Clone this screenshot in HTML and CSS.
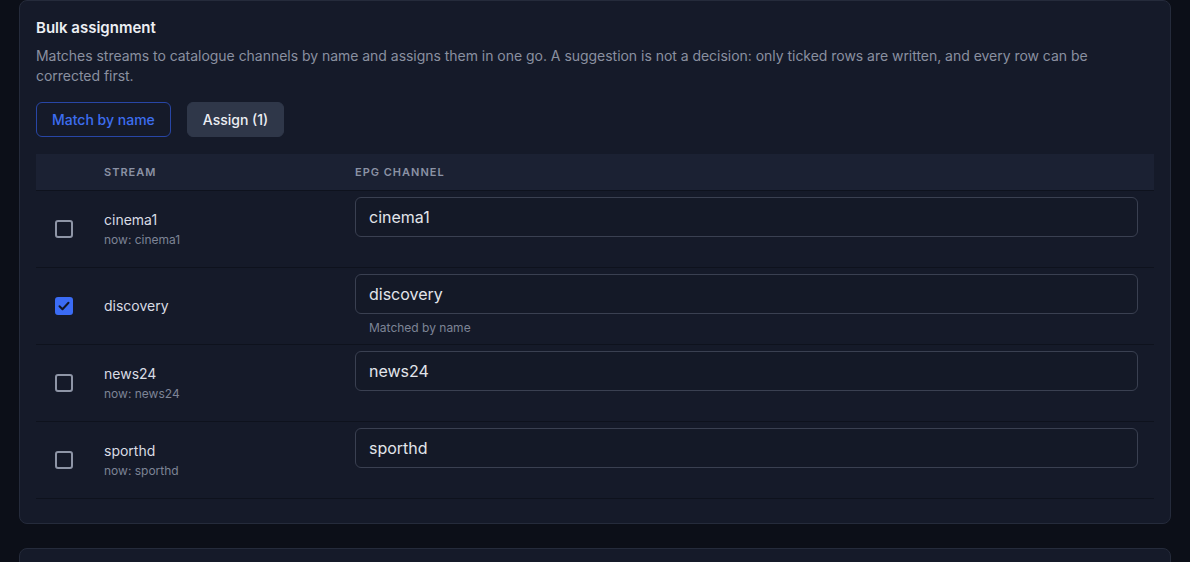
FILE: index.html
```html
<!DOCTYPE html>
<html lang="en">
<head>
<meta charset="utf-8">
<title>Bulk assignment</title>
<link rel="stylesheet" href="styles.css">
</head>
<body>
<main class="page">
  <section class="card">
    <h2 class="card-title">Bulk assignment</h2>
    <p class="card-desc">Matches streams to catalogue channels by name and assigns them in one go. A suggestion is not a decision: only ticked rows are written, and every row can be corrected first.</p>
    <div class="actions">
      <button class="btn btn-outline" type="button">Match by name</button>
      <button class="btn btn-solid" type="button">Assign (1)</button>
    </div>
    <div class="table">
      <div class="thead">
        <div class="th"></div>
        <div class="th">Stream</div>
        <div class="th">EPG channel</div>
      </div>
      <div class="tr">
        <div class="td td-check"><span class="checkbox"></span></div>
        <div class="td td-stream"><div class="stream-name">cinema1</div><div class="stream-sub">now: cinema1</div></div>
        <div class="td td-epg"><div class="input">cinema1</div><div class="hint"></div></div>
      </div>
      <div class="tr">
        <div class="td td-check"><span class="checkbox checked"><svg viewBox="0 0 18 18" width="18" height="18"><path d="M4.5 9.2l3 3 6-6.4" fill="none" stroke="#121726" stroke-width="2" stroke-linecap="round" stroke-linejoin="round"/></svg></span></div>
        <div class="td td-stream"><div class="stream-name">discovery</div></div>
        <div class="td td-epg"><div class="input">discovery</div><div class="hint">Matched by name</div></div>
      </div>
      <div class="tr">
        <div class="td td-check"><span class="checkbox"></span></div>
        <div class="td td-stream"><div class="stream-name">news24</div><div class="stream-sub">now: news24</div></div>
        <div class="td td-epg"><div class="input">news24</div><div class="hint"></div></div>
      </div>
      <div class="tr">
        <div class="td td-check"><span class="checkbox"></span></div>
        <div class="td td-stream"><div class="stream-name">sporthd</div><div class="stream-sub">now: sporthd</div></div>
        <div class="td td-epg"><div class="input">sporthd</div><div class="hint"></div></div>
      </div>
    </div>
  </section>
  <section class="card card-next"></section>
</main>
</body>
</html>
```

FILE: styles.css
```css
* { box-sizing: border-box; }
html, body {
  margin: 0;
  padding: 0;
  background: #0c0f18;
  font-family: Inter, "Liberation Sans", sans-serif;
  color: #d9dce4;
  overflow: hidden;
}
.page {
  padding: 0 19px;
  display: flex;
  flex-direction: column;
  gap: 24px;
}
.card {
  background: #151a29;
  border: 1px solid #252b3b;
  border-radius: 8px;
  padding: 17px 16px 24px;
}
.card-next {
  height: 60px;
}
.card-title {
  margin: 0;
  font-size: 15px;
  line-height: 20px;
  font-weight: 600;
  color: #eceef3;
}
.card-desc {
  margin: 8px 0 0;
  max-width: 1090px;
  font-size: 14px;
  line-height: 19.5px;
  letter-spacing: -0.03px;
  color: #8a90a0;
}
.actions {
  display: flex;
  gap: 16px;
  margin-top: 17px;
}
.btn {
  height: 35px;
  padding: 0 15px;
  border-radius: 6px;
  font-family: inherit;
  font-size: 14px;
  font-weight: 500;
  cursor: pointer;
}
.btn-outline {
  background: transparent;
  border: 1px solid #2846a6;
  color: #3d6ef0;
}
.btn-solid {
  background: #2f3749;
  border: 1px solid #2f3749;
  color: #eceef3;
}
.table {
  margin-top: 17px;
}
.thead, .tr {
  display: grid;
  grid-template-columns: 68px 251px 1fr;
}
.thead {
  background: #1b2133;
  height: 37px;
  border-bottom: 1px solid #0e121d;
  align-items: center;
}
.th {
  font-size: 11px;
  font-weight: 600;
  letter-spacing: 1px;
  text-transform: uppercase;
  color: #8b92a5;
}
.tr {
  border-bottom: 1px solid #0e121d;
  align-items: center;
}
.td-check {
  padding-left: 19px;
  display: flex;
  align-items: center;
}
.checkbox {
  width: 18px;
  height: 18px;
  border: 2px solid #8e95a6;
  border-radius: 3px;
  display: inline-flex;
}
.checkbox.checked {
  background: #3b6cf5;
  border-color: #3b6cf5;
}
.checkbox.checked svg {
  margin: -2px;
}
.stream-name {
  font-size: 14px;
  line-height: 18px;
  color: #d9dce4;
}
.stream-sub {
  margin-top: 3px;
  font-size: 12px;
  line-height: 16px;
  color: #7d8496;
}
.td-epg {
  padding: 6px 16px 8px 0;
}
.input {
  height: 40px;
  border: 1px solid #3a4051;
  border-radius: 6px;
  background: #141927;
  padding: 0 13px;
  display: flex;
  align-items: center;
  font-size: 16px;
  color: #e2e5eb;
}
.hint {
  margin-top: 6px;
  height: 16px;
  padding-left: 14px;
  font-size: 12px;
  line-height: 16px;
  color: #7d8496;
}
```
